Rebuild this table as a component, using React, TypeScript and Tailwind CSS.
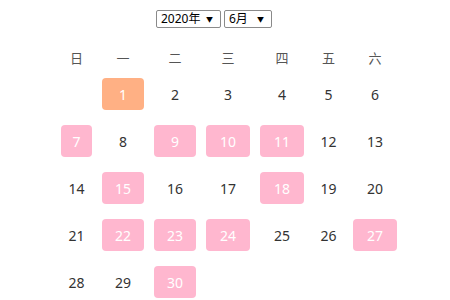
import React from 'react';

const WEEK = ['日', '一', '二', '三', '四', '五', '六'];

// 0: plain, 1: pink, 2: today (orange)
const MARKED: Record<number, number> = {
  1: 2, 7: 1, 9: 1, 10: 1, 11: 1, 15: 1, 18: 1, 22: 1, 23: 1, 24: 1, 27: 1, 30: 1,
};

const COLS = 'grid grid-cols-[31px_42px_42px_44px_44px_29px_44px] gap-x-[10px]';

function FakeSelect({ label, width }: { label: string; width: string }) {
  return (
    <div
      className={`${width} h-[18px] flex items-center justify-between border border-[#8a8a8a] rounded-[2px] bg-white pl-[4px] pr-[7px] text-[12px] leading-none text-black`}
    >
      <span>{label}</span>
      <span className="text-[7px] leading-none">▼</span>
    </div>
  );
}

export default function App() {
  const days: (number | null)[] = [null];
  for (let d = 1; d <= 30; d++) days.push(d);

  return (
    <div
      className="w-[450px] h-[300px] bg-white overflow-hidden pt-[10px]"
      style={{ fontFamily: '"Noto Sans", "Noto Sans CJK SC", sans-serif' }}
    >
      {/* 年月选择 */}
      <div className="flex pl-[156px] gap-[3px]">
        <FakeSelect label="2020年" width="w-[65px]" />
        <FakeSelect label="6月" width="w-[48px]" />
      </div>

      {/* 星期 */}
      <div className={`${COLS} pl-[61px] mt-[19px]`}>
        {WEEK.map((w) => (
          <div key={w} className="h-[24px] flex items-center justify-center text-[13px] text-[#555]">
            {w}
          </div>
        ))}
      </div>

      {/* 日期 */}
      <div className={`${COLS} gap-y-[15px] pl-[61px] mt-[7px]`}>
        {days.map((d, i) => {
          const mark = d ? MARKED[d] || 0 : 0;
          const bg = mark === 2 ? 'bg-[#ffb084] text-white' : mark === 1 ? 'bg-[#ffb7cf] text-white' : 'text-[#333]';
          return (
            <div
              key={i}
              className={`h-[32px] flex items-center justify-center rounded-[4px] text-[14px] ${bg}`}
            >
              {d ?? ''}
            </div>
          );
        })}
      </div>
    </div>
  );
}
